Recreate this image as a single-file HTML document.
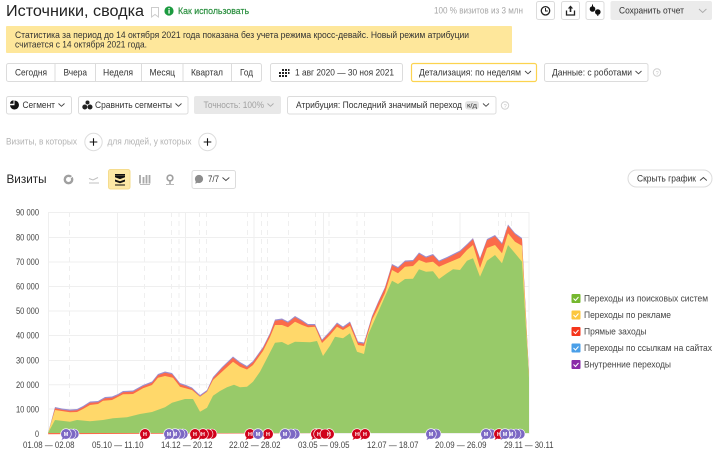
<!DOCTYPE html>
<html lang="ru"><head><meta charset="utf-8"><title>Источники, сводка</title>
<style>
html,body{margin:0;padding:0;background:#fff;width:720px;height:451px;overflow:hidden}
svg{display:block;filter:blur(.3px)}
text{font-family:"Liberation Sans",sans-serif;font-size:9.4px;fill:#333;white-space:pre}
.b{fill:#fff;stroke:#dcdcdc;stroke-width:1}
.c{fill:none;stroke:#444;stroke-width:.9}
.g{stroke:#efefef;stroke-width:1;fill:none}
.d{stroke:#efefef;stroke-width:1;stroke-dasharray:5 4;fill:none}
.y text{font-size:9px;fill:#444}
.x text{font-size:9.4px;fill:#444}
.l text{font-size:9.6px;fill:#444}
.m text{font-size:5.4px;font-weight:bold;fill:#fff;text-anchor:middle}
</style></head><body>
<svg width="720" height="451" viewBox="0 0 720 451" xmlns="http://www.w3.org/2000/svg">
<!-- header -->
<text x="6" y="16" style="font-size:15.5px;fill:#222" textLength="138" lengthAdjust="spacingAndGlyphs">Источники, сводка</text>
<path d="M151.5 7.5h7v9.5l-3.5-2.5-3.500 2.500z" fill="none" stroke="#ccc"/>
<circle cx="169" cy="11" r="4.6" fill="#1b9a3f"/><rect x="168.4" y="10" width="1.3" height="3.6" fill="#fff"/><rect x="168.4" y="8" width="1.3" height="1.3" fill="#fff"/>
<text x="178" y="14" style="fill:#2a8f3f;stroke:#2a8f3f;stroke-width:.2" textLength="71" lengthAdjust="spacingAndGlyphs">Как использовать</text>
<text x="434" y="13.5" style="fill:#a6a6a6" textLength="89" lengthAdjust="spacingAndGlyphs">100 % визитов из 3 млн</text>
<rect class="b" x="536.5" y="1.5" width="18" height="18" rx="2"/>
<circle cx="545.5" cy="10.8" r="4.2" fill="none" stroke="#222" stroke-width="1.3"/><path d="M545.5 8v3h2.3" fill="none" stroke="#222"/>
<rect class="b" x="561.5" y="1.5" width="18" height="18" rx="2"/>
<path d="M570.5 5.5l-2.7 3h1.900v3.500h1.600v-3.500h1.900z" fill="#222"/><path d="M566.5 10.5v4.500h8v-4.500" fill="none" stroke="#222" stroke-width="1.3"/>
<rect class="b" x="586" y="1.5" width="18" height="18" rx="2"/>
<circle cx="592.5" cy="9" r="2.800" fill="#111"/><circle cx="597.8" cy="12" r="2.800" fill="#111"/><path d="M592.5 4.500v2M597.8 14v2" stroke="#111"/>
<rect x="610.5" y="1" width="101.5" height="19" rx="2" fill="#ebebeb"/>
<text x="619" y="13.5" style="fill:#333" textLength="65" lengthAdjust="spacingAndGlyphs">Сохранить отчет</text>
<path class="c" d="M699 9l3.700 3.500 3.700-3.500" style="stroke:#aaa"/>
<!-- banner -->
<rect x="6" y="26" width="506" height="27" rx="1" fill="#fee79b"/>
<text x="15" y="38" textLength="454" lengthAdjust="spacingAndGlyphs">Статистика за период до 14 октября 2021 года показана без учета режима кросс-девайс. Новый режим атрибуции</text>
<text x="15" y="47.5" textLength="132" lengthAdjust="spacingAndGlyphs">считается с 14 октября 2021 года.</text>
<!-- date row -->
<rect class="b" x="6.5" y="63.5" width="255" height="18" rx="2"/>
<path d="M55 64v17M95.500 64v17M141.500 64v17M183 64v17M231.500 64v17" stroke="#dcdcdc"/>
<text x="15" y="75.500" textLength="32" lengthAdjust="spacingAndGlyphs">Сегодня</text>
<text x="63.500" y="75.500" textLength="23.500" lengthAdjust="spacingAndGlyphs">Вчера</text>
<text x="103" y="75.500" textLength="30" lengthAdjust="spacingAndGlyphs">Неделя</text>
<text x="149.500" y="75.500" textLength="25.500" lengthAdjust="spacingAndGlyphs">Месяц</text>
<text x="191" y="75.500" textLength="32" lengthAdjust="spacingAndGlyphs">Квартал</text>
<text x="240" y="75.500" textLength="13" lengthAdjust="spacingAndGlyphs">Год</text>
<rect class="b" x="270.500" y="63.500" width="132" height="18" rx="2"/>
<path d="M282 69h2v2h-2zM285 69h2v2h-2zM288 69h1.500v2h-1.500zM279 72h2v2h-2zM282 72h2v2h-2zM285 72h2v2h-2zM288 72h1.500v2h-1.500zM279 75h2v2h-2zM282 75h2v2h-2zM285 75h2v2h-2z" fill="#222"/>
<text x="295" y="75.500" textLength="99" lengthAdjust="spacingAndGlyphs">1 авг 2020 — 30 ноя 2021</text>
<rect x="411.500" y="63.500" width="125" height="18" rx="2" fill="#fff" stroke="#fcd34f" stroke-width="1.200"/>
<text x="419" y="75.500" textLength="102" lengthAdjust="spacingAndGlyphs">Детализация: по неделям</text>
<path class="c" d="M525 71l3 2.800 3-2.800"/>
<rect class="b" x="544.500" y="63.500" width="103.500" height="18" rx="2"/>
<text x="552" y="75.500" textLength="80" lengthAdjust="spacingAndGlyphs">Данные: с роботами</text>
<path class="c" d="M635.500 71l3 2.800 3-2.800"/>
<circle cx="657" cy="72.500" r="3.700" fill="none" stroke="#d0d0d0"/><text x="655.600" y="75" style="font-size:5.500px;fill:#c8c8c8">?</text>
<!-- row 2 -->
<rect class="b" x="6.500" y="96.500" width="65" height="17.500" rx="2"/>
<path d="M14.500 100.500a4.500 4.500 0 1 1-4.500 4.800h4.500z" fill="#111"/><path d="M10 103.800a4 4 0 0 1 3.500-3.500v3.500z" fill="#111"/>
<text x="22.500" y="108" textLength="32.500" lengthAdjust="spacingAndGlyphs">Сегмент</text>
<path class="c" d="M58.500 103.500l3 2.800 3-2.800"/>
<rect class="b" x="78.500" y="96.500" width="109.500" height="17.500" rx="2"/>
<circle cx="84.800" cy="107" r="2.500" fill="#222"/><circle cx="90" cy="107" r="2.500" fill="#222"/><circle cx="87.500" cy="102.500" r="2" fill="#222"/>
<text x="95" y="108" textLength="77" lengthAdjust="spacingAndGlyphs">Сравнить сегменты</text>
<path class="c" d="M175.500 103.500l3 2.800 3-2.800"/>
<rect x="194" y="96" width="87" height="18" rx="2" fill="#e8e8e8"/>
<text x="203.500" y="108" style="fill:#a0a0a0" textLength="60.500" lengthAdjust="spacingAndGlyphs">Точность: 100%</text>
<path class="c" d="M267.500 103.500l3 2.800 3-2.800" style="stroke:#aaa"/>
<rect class="b" x="287.500" y="96.500" width="208.500" height="17.500" rx="2"/>
<text x="296" y="108" textLength="166" lengthAdjust="spacingAndGlyphs">Атрибуция: Последний значимый переход</text>
<rect x="465" y="101" width="14" height="8.500" rx="3" fill="#e3e3e3"/><text x="467" y="107.500" style="font-size:6.500px" textLength="10" lengthAdjust="spacingAndGlyphs">к/д</text>
<path class="c" d="M483 103.500l3 2.800 3-2.800"/>
<circle cx="505" cy="105.500" r="3.700" fill="none" stroke="#d0d0d0"/><text x="503.600" y="108" style="font-size:5.500px;fill:#c8c8c8">?</text>
<!-- filter row -->
<text x="6" y="144.500" style="fill:#b3b3b3" textLength="71" lengthAdjust="spacingAndGlyphs">Визиты, в которых</text>
<circle cx="93.500" cy="142" r="8.700" fill="#fff" stroke="#ddd"/><path d="M93.500 138.200v7.600M89.700 142h7.600" stroke="#111" stroke-width="1.100"/>
<text x="107.500" y="144.500" style="fill:#b3b3b3" textLength="84" lengthAdjust="spacingAndGlyphs">для людей, у которых</text>
<circle cx="207.500" cy="142" r="8.700" fill="#fff" stroke="#ddd"/><path d="M207.500 138.200v7.600M203.700 142h7.600" stroke="#111" stroke-width="1.100"/>
<!-- chart controls -->
<text x="6.500" y="183" style="font-size:12px;fill:#222" textLength="40" lengthAdjust="spacingAndGlyphs">Визиты</text>
<circle cx="68.500" cy="179.500" r="3.700" fill="none" stroke="#a0a0a0" stroke-width="2.400"/><path d="M69 179l4-3" stroke="#fff" stroke-width="1"/>
<path d="M89 178.500l4 1.500 5-2.500" fill="none" stroke="#c0c0c0"/><path d="M89 183h10" stroke="#c0c0c0"/>
<rect x="108.500" y="169.500" width="21.500" height="19.500" rx="2" fill="#fde9a6" stroke="#f5dc8e"/>
<path d="M115 175.300h10v2l-5 1.800-5-1.800zM115 179.500l5 1.800 5-1.800v2l-5 1.800-5-1.800z" fill="#111"/><path d="M115 185h10" stroke="#111" stroke-width="1"/><path d="M115 174.500h10" stroke="#111"/>
<path d="M140 175v8.500M143.500 177v6.500M146.500 175v8.500M149.500 175v8.500" stroke="#a8a8a8" stroke-width="1.800"/><path d="M140 184.500h10" stroke="#bbb"/>
<circle cx="170" cy="178" r="2.800" fill="none" stroke="#a0a0a0" stroke-width="1.700"/><path d="M170 181.500v2.500" stroke="#a0a0a0" stroke-width="1.500"/><path d="M166 184.500h8" stroke="#bbb"/>
<rect class="b" x="192" y="170.500" width="43.500" height="18" rx="2"/>
<circle cx="199" cy="179" r="4.100" fill="#8c8c8c"/><path d="M195.800 181l-.5 2.800 2.500-1.200z" fill="#8c8c8c"/>
<text x="208" y="182" textLength="11" lengthAdjust="spacingAndGlyphs">7/7</text>
<path class="c" d="M222.500 177.500l3.400 3 3.400-3"/>
<rect class="b" x="628" y="170" width="84" height="17" rx="8.500"/>
<text x="637" y="181.500" textLength="59" lengthAdjust="spacingAndGlyphs">Скрыть график</text>
<path class="c" d="M700 180.500l3.400-3 3.400 3"/>
<!-- y labels -->
<g class="y">
<text x="16" y="215.500" textLength="23" lengthAdjust="spacingAndGlyphs">90 000</text>
<text x="16" y="240.500" textLength="23" lengthAdjust="spacingAndGlyphs">80 000</text>
<text x="16" y="265" textLength="23" lengthAdjust="spacingAndGlyphs">70 000</text>
<text x="16" y="289.500" textLength="23" lengthAdjust="spacingAndGlyphs">60 000</text>
<text x="16" y="314" textLength="23" lengthAdjust="spacingAndGlyphs">50 000</text>
<text x="16" y="338.500" textLength="23" lengthAdjust="spacingAndGlyphs">40 000</text>
<text x="16" y="363.500" textLength="23" lengthAdjust="spacingAndGlyphs">30 000</text>
<text x="16" y="388" textLength="23" lengthAdjust="spacingAndGlyphs">20 000</text>
<text x="16" y="412.500" textLength="23" lengthAdjust="spacingAndGlyphs">10 000</text>
<text x="35" y="437" textLength="4" lengthAdjust="spacingAndGlyphs">0</text>
</g>
<!-- grid -->
<path class="g" d="M48 212.500h481M48 237.500h481M48 262h481M48 286.500h481M48 311h481M48 335.500h481M48 360.500h481M48 384.700h481M48 409h481M48 433.500h481"/>
<path class="g" d="M48.500 212v222M117.500 212v222M185.500 212v222M254 212v222M323.500 212v222M391.500 212v222M460 212v222M529 212v222"/>
<path class="d" d="M69.500 212v222M144.500 212v222M171.500 212v222M179 212v222M199.500 212v222M206.500 212v222M247.500 212v222M261.500 212v222M267.500 212v222M288.500 212v222M315.500 212v222M329 212v222M357 212v222M364.500 212v222M432.500 212v222M498.500 212v222M505.500 212v222M511.500 212v222"/>
<!-- areas -->
<polygon fill="#9b8fd0" points="48,433 55,407 62,408.500 70,409.500 77,409 83,406 90,401.500 98,401 105,397 112,396.500 118,394 123,391 133,390.500 143,385 152,381.500 158,374 165,371.500 172,373 180,383 186,385 192,387.500 200,395 207,390 213,377 222,367 233,356.500 240,362 247,366 253,361 263,347 270,333 275,319.500 282,318.500 288,321.500 295,316 302,320 308,324 315,324 322,339.500 330,331 337,322.500 343,326.500 350,321.500 358,341.500 364,342.500 372,316 378,302 385,287 392,264 398,267 405,260.500 413,260 419,252.500 426,256.500 433,254 439,260.500 447,257 453,254 460,250.500 467,244 473,238 480,258 487,239 495,235 502,243 508,224.500 515,233 522,238 529,374 529,433"/>
<polygon fill="#fb6b4a" transform="translate(0,1.200)" points="48,433 55,407 62,408.500 70,409.500 77,409 83,406 90,401.500 98,401 105,397 112,396.500 118,394 123,391 133,390.500 143,385 152,381.500 158,374 165,371.500 172,373 180,383 186,385 192,387.500 200,395 207,390 213,377 222,367 233,356.500 240,362 247,366 253,361 263,347 270,333 275,319.500 282,318.500 288,321.500 295,316 302,320 308,324 315,324 322,339.500 330,331 337,322.500 343,326.500 350,321.500 358,341.500 364,342.500 372,316 378,302 385,287 392,264 398,267 405,260.500 413,260 419,252.500 426,256.500 433,254 439,260.500 447,257 453,254 460,250.500 467,244 473,238 480,258 487,239 495,235 502,243 508,224.500 515,233 522,238 529,374 529,431"/>
<polygon fill="#ffd86a" points="48,433 55,410 70,412.300 77,412 83,409 90,405 98,404 103,400.700 112,400 123,394.300 133,394 143,388.300 152,385 158,377.700 165,376 173,377.700 180,386.700 192,390 200,396.700 207,391.700 213,380 222,371.700 233,361.700 240,366.700 247,369.500 253,365 263,351 270,337 275,325 282,325 288,327.300 295,321.700 302,325 308,327.300 315,326.700 322,343 330,335 337,326.700 343,330 350,325.700 358,345 364,346 372,320 378,308 385,293 392,270 398,273.300 405,266.700 413,266 419,260 426,262.700 433,261.700 439,266.700 447,263.300 453,260.700 460,257.700 467,250 473,245 480,268 487,248 495,245 502,253.300 508,233.300 515,241.700 522,245.700 529,376 529,433"/>
<polygon fill="#98ca69" points="48,433 55,420 70,421.700 77,420 90,421.300 103,420 113,418.300 127,417.300 140,414 152,412 165,407.300 172,402.700 178,401 185,399 193,399 200,411.700 207,407.700 213,395.700 220,391 227,387.300 234,384.700 240,387.300 247,386.700 253,381.700 260,371.700 267,358.300 275,342.700 282,342 288,345 295,341.700 310,342.300 317,341 323,356 330,345.700 335,336.700 343,338.300 350,333.300 357,351.700 364,354 368,335 392,280.700 398,284 405,279 413,278.700 419,269.300 426,271.700 433,271.300 439,279 447,273.300 453,269.300 460,270 467,260.700 473,258.300 480,276.700 487,260.700 495,255 502,263.300 508,245 515,253.300 522,261.700 529,378 529,433"/>
<!-- markers -->
<g class="m">
<g fill="#7c68c4" stroke="#fff" stroke-width=".6">
<circle cx="74" cy="434" r="5"/><circle cx="71" cy="434" r="5"/><circle cx="66" cy="434" r="5.300"/>
<circle cx="183" cy="434" r="5"/><circle cx="180" cy="434" r="5"/><circle cx="175" cy="434" r="5.300"/><circle cx="169" cy="434" r="5.300"/>
<circle cx="295" cy="434" r="5"/><circle cx="291" cy="434" r="5"/><circle cx="285" cy="434" r="5.300"/>
<circle cx="436" cy="434" r="5"/><circle cx="431" cy="434" r="5.300"/>
<circle cx="491" cy="434" r="5"/><circle cx="486" cy="434" r="5.300"/>
</g>
<g fill="#d0021b" stroke="#fff" stroke-width=".6">
<circle cx="145" cy="434" r="5.300"/>
<circle cx="212" cy="434" r="5"/><circle cx="208" cy="434" r="5"/><circle cx="203" cy="434" r="5.300"/><circle cx="195" cy="434" r="5.300"/>
<circle cx="250" cy="434" r="5.300"/>
<circle cx="268" cy="434" r="5.300"/>
<circle cx="316" cy="434" r="5.300"/><circle cx="319" cy="434" r="5.300"/>
<circle cx="329" cy="434" r="5.300"/><circle cx="325" cy="434" r="5"/>
<circle cx="357" cy="434" r="5.300"/><circle cx="365" cy="434" r="5.300"/>
<circle cx="499" cy="434" r="5.300"/>
</g>
<g fill="#7c68c4" stroke="#fff" stroke-width=".6">
<circle cx="258" cy="434" r="5.300"/>
<circle cx="520" cy="434" r="5"/><circle cx="516" cy="434" r="5"/><circle cx="511" cy="434" r="5"/><circle cx="505" cy="434" r="5.300"/>
</g>
<path d="M63 437l-1.500 3 4-2zM166 437l-1.500 3 4-2zM282 437l-1.500 3 4-2zM428 437l-1.500 3 4-2zM483 437l-1.500 3 4-2zM502 437l-1.500 3 4-2z" fill="#7c68c4"/>
<path d="M142 437l-1.500 3 4-2zM192 437l-1.500 3 4-2zM200 437l-1.500 3 4-2zM247 437l-1.500 3 4-2zM265 437l-1.500 3 4-2zM313 437l-1.500 3 4-2zM354 437l-1.500 3 4-2zM362 437l-1.500 3 4-2zM496 437l-1.500 3 4-2z" fill="#d0021b"/>
<text x="66" y="436">М</text><text x="145" y="436">Н</text><text x="169" y="436">М</text><text x="175" y="436">М</text><text x="195" y="436">Н</text><text x="203" y="436">Н</text>
<text x="250" y="436">Н</text><text x="258" y="436">М</text><text x="268" y="436">Н</text><text x="285" y="436">М</text><text x="319" y="436">Н</text><text x="329" y="436">Н</text><text x="357" y="436">Н</text><text x="365" y="436">Н</text><text x="431" y="436">М</text><text x="486" y="436">М</text><text x="499" y="436">Н</text><text x="505" y="436">М</text><text x="511" y="436">М</text>
</g>
<!-- x labels -->
<g class="x">
<text x="23" y="448" textLength="51.500" lengthAdjust="spacingAndGlyphs">01.08 — 02.08</text>
<text x="92" y="448" textLength="51.500" lengthAdjust="spacingAndGlyphs">05.10 — 11.10</text>
<text x="161" y="448" textLength="51.500" lengthAdjust="spacingAndGlyphs">14.12 — 20.12</text>
<text x="229" y="448" textLength="51.500" lengthAdjust="spacingAndGlyphs">22.02 — 28.02</text>
<text x="298" y="448" textLength="51.500" lengthAdjust="spacingAndGlyphs">03.05 — 09.05</text>
<text x="367" y="448" textLength="51.500" lengthAdjust="spacingAndGlyphs">12.07 — 18.07</text>
<text x="435" y="448" textLength="51.500" lengthAdjust="spacingAndGlyphs">20.09 — 26.09</text>
<text x="504" y="448" textLength="49.500" lengthAdjust="spacingAndGlyphs">29.11 — 30.11</text>
</g>
<!-- legend -->
<g class="l">
<rect x="571.500" y="294" width="9" height="9" rx="1" fill="#75b82f"/><path d="M573.500 298.500l2 2 3-3.500" fill="none" stroke="#fff"/>
<text x="584" y="301.500" textLength="124" lengthAdjust="spacingAndGlyphs">Переходы из поисковых систем</text>
<rect x="571.500" y="310.500" width="9" height="9" rx="1" fill="#fcc73f"/><path d="M573.500 315l2 2 3-3.500" fill="none" stroke="#fff"/>
<text x="584" y="318" textLength="87" lengthAdjust="spacingAndGlyphs">Переходы по рекламе</text>
<rect x="571.500" y="327" width="9" height="9" rx="1" fill="#f5361c"/><path d="M573.500 331.500l2 2 3-3.500" fill="none" stroke="#fff"/>
<text x="584" y="334.500" textLength="62.500" lengthAdjust="spacingAndGlyphs">Прямые заходы</text>
<rect x="571.500" y="343.500" width="9" height="9" rx="1" fill="#4a9fe8"/><path d="M573.500 348l2 2 3-3.500" fill="none" stroke="#fff"/>
<text x="584" y="351" textLength="128" lengthAdjust="spacingAndGlyphs">Переходы по ссылкам на сайтах</text>
<rect x="571.500" y="360" width="9" height="9" rx="1" fill="#8a2ba8"/><path d="M573.500 364.500l2 2 3-3.500" fill="none" stroke="#fff"/>
<text x="584" y="367.500" textLength="87" lengthAdjust="spacingAndGlyphs">Внутренние переходы</text>
</g>
</svg>
</body></html>
